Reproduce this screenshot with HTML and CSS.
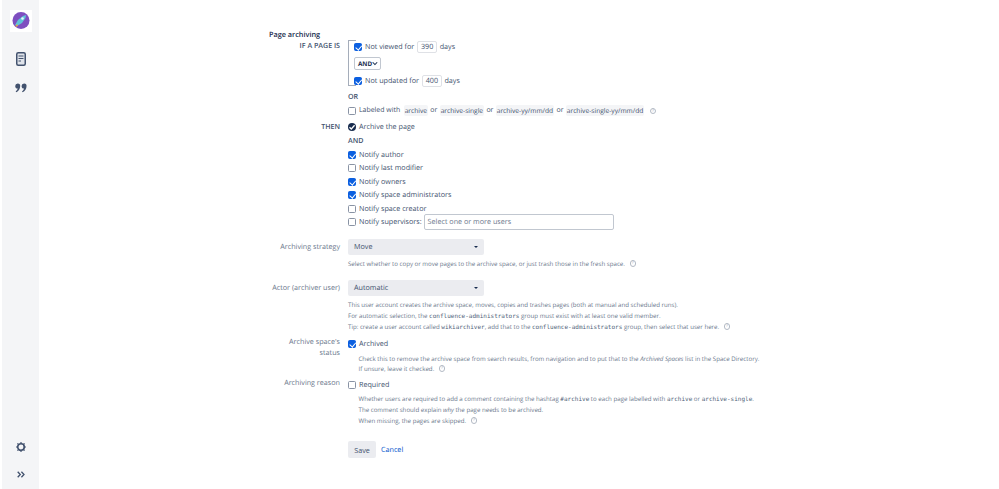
FILE: index.html
```html
<!DOCTYPE html>
<html lang="en">
<head>
<meta charset="utf-8">
<title>Page archiving</title>
<link rel="stylesheet" href="styles.css">
</head>
<body>
<div class="app">
  <nav class="sidebar">
    <div class="logo">
      <svg width="22" height="22" viewBox="0 0 22 22">
        <rect width="22" height="22" fill="#fff"/>
        <circle cx="11" cy="10.500" r="8.500" fill="#7e4fc0"/>
        <path d="M5 15 L8 10 L13 6 L16 5 L15.500 8 L12 13 L7 16 Z" fill="#5fc4d8"/>
        <circle cx="12.500" cy="8.500" r="1.300" fill="#e8f6fa"/>
        <path d="M5 17 L7 14 L8 16 Z" fill="#f0a23c"/>
      </svg>
    </div>
    <svg class="nav-icon page-icon" width="10" height="14" viewBox="0 0 10 14">
      <rect x=".75" y=".75" width="8.500" height="12.500" rx="1.500" fill="#dfe3ea" stroke="#42526e" stroke-width="1.500"/>
      <path d="M2.500 4H7.500M2.500 6.500H7.500M2.500 9H5" stroke="#42526e" stroke-width="1"/>
    </svg>
    <svg class="nav-icon quote-icon" width="12" height="10" viewBox="0 0 13 11">
      <path d="M3 0.500a2.600 2.600 0 0 1 2.600 2.800c0 3-1.700 5.700-4.300 7l-.7-1c1.200-.9 2-1.900 2.300-3.200A2.700 2.700 0 0 1 3 .5ZM10 .5a2.600 2.600 0 0 1 2.600 2.800c0 3-1.700 5.700-4.300 7l-.7-1c1.200-.9 2-1.900 2.300-3.200A2.700 2.700 0 0 1 10 .5Z" fill="#42526e"/>
    </svg>
    <div class="sidebar-spacer"></div>
    <svg class="nav-icon gear-icon" width="10" height="10" viewBox="0 0 11 11">
      <circle cx="5.500" cy="5.500" r="3.600" fill="none" stroke="#42526e" stroke-width="1.800"/>
      <path d="M5.500 0V2M5.500 9V11M0 5.500H2M9 5.500H11M1.600 1.600L3 3M8 8L9.400 9.400M1.600 9.400L3 8M8 3L9.400 1.600" stroke="#42526e" stroke-width="1.300"/>
    </svg>
    <svg class="nav-icon expand-icon" width="8" height="7" viewBox="0 0 8 7">
      <path d="M.7.700L3.300 3.500.7 6.300M4.400.7L7 3.500 4.400 6.300" fill="none" stroke="#42526e" stroke-width="1.300"/>
    </svg>
  </nav>

  <main class="main">
    <h1 class="title">Page archiving</h1>

    <div class="row r-condition">
      <div class="label strong">IF A PAGE IS</div>
      <div class="body">
        <div class="bracket">
          <div class="line"><span class="cb on"></span><span>Not viewed for</span><span class="num">390</span><span>days</span></div>
          <div class="op-select">AND<svg width="7" height="5" viewBox="0 0 7 5"><path d="M.8 1L3.500 3.700 6.200 1" fill="none" stroke="#172b4d" stroke-width="1.200"/></svg></div>
          <div class="line"><span class="cb on"></span><span>Not updated for</span><span class="num">400</span><span>days</span></div>
        </div>
        <div class="bold-line or-line">OR</div>
        <div class="line l-labeled"><span class="cb"></span><span class="lab">Labeled with</span><span class="tag">archive</span><span>or</span><span class="tag">archive-single</span><span>or</span><span class="tag">archive-yy/mm/dd</span><span>or</span><span class="tag">archive-single-yy/mm/dd</span><span class="help"></span></div>
      </div>
    </div>

    <div class="row r-then">
      <div class="label strong">THEN</div>
      <div class="body">
        <div class="line"><span class="radio"><svg width="8" height="8" viewBox="0 0 8 8"><path d="M1.500 4.200L3.300 6 6.600 2.200" fill="none" stroke="#fff" stroke-width="1.300"/></svg></span><span>Archive the page</span></div>
        <div class="bold-line and-line">AND</div>
        <div class="line tight"><span class="cb on"></span><span>Notify author</span></div>
        <div class="line tight"><span class="cb"></span><span>Notify last modifier</span></div>
        <div class="line tight"><span class="cb on"></span><span>Notify owners</span></div>
        <div class="line tight"><span class="cb on"></span><span>Notify space administrators</span></div>
        <div class="line tight"><span class="cb"></span><span>Notify space creator</span></div>
        <div class="line tight"><span class="cb"></span><span>Notify supervisors:</span><span class="user-input">Select one or more users</span></div>
      </div>
    </div>

    <div class="row r-strategy">
      <div class="label">Archiving strategy</div>
      <div class="body">
        <div class="select"><span>Move</span><i class="caret"></i></div>
        <p class="desc first">Select whether to copy or move pages to the archive space, or just trash those in the fresh space. <span class="help"></span></p>
      </div>
    </div>

    <div class="row r-actor">
      <div class="label">Actor (archiver user)</div>
      <div class="body">
        <div class="select"><span>Automatic</span><i class="caret"></i></div>
        <p class="desc first">This user account creates the archive space, moves, copies and trashes pages (both at manual and scheduled runs).</p>
        <p class="desc">For automatic selection, the <code>confluence-administrators</code> group must exist with at least one valid member.</p>
        <p class="desc">Tip: create a user account called <code>wikiarchiver</code>, add that to the <code>confluence-administrators</code> group, then select that user here. <span class="help"></span></p>
      </div>
    </div>

    <div class="row r-status">
      <div class="label">Archive space's status</div>
      <div class="body">
        <div class="line"><span class="cb on"></span><span>Archived</span></div>
        <p class="desc indent d-first">Check this to remove the archive space from search results, from navigation and to put that to the <em>Archived Spaces</em> list in the Space Directory.</p>
        <p class="desc indent">If unsure, leave it checked. <span class="help"></span></p>
      </div>
    </div>

    <div class="row r-reason">
      <div class="label">Archiving reason</div>
      <div class="body">
        <div class="line"><span class="cb"></span><span>Required</span></div>
        <p class="desc indent d-first">Whether users are required to add a comment containing the hashtag <code>#archive</code> to each page labelled with <code>archive</code> or <code>archive-single</code>.</p>
        <p class="desc indent">The comment should explain <em>why</em> the page needs to be archived.</p>
        <p class="desc indent">When missing, the pages are skipped. <span class="help"></span></p>
      </div>
    </div>

    <div class="row r-actions">
      <div class="label"></div>
      <div class="body actions"><button class="save" type="button">Save</button><a class="cancel" href="#">Cancel</a></div>
    </div>
  </main>
</div>
</body>
</html>
```
FILE: styles.css
```css
* { box-sizing: border-box; }
html, body { margin: 0; height: 489px; overflow: hidden; background: #fff; }
body { font-family: "Open Sans", "Noto Sans", sans-serif; font-size: 7.200px; color: #42526e; text-rendering: geometricPrecision; }
.app { display: flex; height: 489px; }
.sidebar { width: 37px; margin-left: 2px; background: #f4f5f7; display: flex; flex-direction: column; align-items: center; flex: none; }
.logo { margin-top: 10px; height: 22px; }
.logo svg { display: block; }
.nav-icon { display: block; flex: none; }
.page-icon { margin-top: 20px; }
.quote-icon { margin-top: 17px; }
.sidebar-spacer { flex: 1; }
.expand-icon { margin-top: 19px; margin-bottom: 11px; }

.main { margin-left: 230px; width: 520px; padding-top: 29px; }
.title { margin: 0; font-size: 7.300px; line-height: 12px; font-weight: 600; color: #172b4d; }
.row { display: flex; }
.label { width: 71px; flex: none; text-align: right; line-height: 11px; color: #6b778c; }
.r-actor .label { white-space: nowrap; }
.label.strong { font-weight: 600; color: #42526e; font-size: 7.100px; }
.body { margin-left: 8px; flex: 1; min-width: 0; }
.line { display: flex; align-items: center; height: 13.500px; white-space: nowrap; gap: 3px; }
.bracket { border: 1px solid #a5adba; border-right: 0; width: 8px; height: 46px; margin-top: -1px; padding: 0 0 0 5px; }
.bracket .line { height: 12px; width: 120px; }
.num { display: inline-block; width: 20px; height: 12px; line-height: 10px; border: 1px solid #dfe1e6; border-radius: 2px; text-align: center; color: #42526e; background: #fff; margin-right: -.5px; }
.op-select { display: flex; align-items: center; justify-content: space-between; width: 27px; height: 13px; margin: 4px 0 5px; padding: 0 2px 0 3px; border: 1px solid #c1c7d0; border-radius: 2px; font-weight: 700; font-size: 6.300px; color: #172b4d; background: #fff; }
.cb { width: 8px; height: 8px; flex: none; border: 1px solid #8993a4; border-radius: 1.500px; background: #fff; position: relative; }
.cb.on { border-color: #0b5fe0; background: #0b5fe0; }
.cb.on::after { content: ""; position: absolute; left: 1.500px; top: 0; width: 2.500px; height: 4.500px; border: solid #fff; border-width: 0 1.200px 1.200px 0; transform: rotate(40deg); }
.bold-line { font-weight: 600; line-height: 12px; font-size: 7.100px; color: #42526e; }
.or-line { margin-top: 5px; }
.l-labeled { margin-top: 1px; gap: 2.300px; font-size: 6.950px; }
.lab { margin: 0 1.200px 0 .700px; }
.tag { background: #f4f5f7; border-radius: 2px; padding: 0 1px; line-height: 11px; font-size: 6.650px; }
.help { display: inline-block; width: 6.500px; height: 6.500px; border: 1px solid #b3bac5; border-radius: 50%; margin-left: 3px; vertical-align: -.5px; flex: none; position: relative; }
.help::after { content: "?"; position: absolute; inset: 0; font-size: 4.500px; line-height: 4.500px; text-align: center; color: #a5adba; }
.radio { width: 8px; height: 8px; border-radius: 50%; background: #172b4d; flex: none; display: flex; align-items: center; justify-content: center; }
.radio svg { display: block; }
.r-then { margin-top: 3px; }
.r-then .label { line-height: 13px; }
.and-line { margin-top: 1px; margin-bottom: 1px; }
.tight { height: 13.500px; }
.user-input { display: block; width: 190px; height: 16px; line-height: 14px; border: 1px solid #c1c7d0; border-radius: 2px; padding-left: 3px; margin-left: -1px; color: #6b778c; }
.r-strategy { margin-top: 10px; }
.r-strategy .label, .r-actor .label { line-height: 16px; }
.select { width: 136px; height: 16px; background: #ebecf0; border-radius: 2px; display: flex; align-items: center; justify-content: space-between; padding: 0 6px; color: #42526e; }
.caret { width: 0; height: 0; border: 2.500px solid transparent; border-top-color: #172b4d; border-bottom-width: 0; }
.desc { margin: 0; height: 11px; font-size: 6.150px; line-height: 11px; color: #6b778c; white-space: nowrap; }
.desc.first { margin-top: 3px; }
.desc code { font-family: "DejaVu Sans Mono", monospace; font-size: 6px; line-height: 1; color: #505f79; }
.desc em { font-style: italic; }
.indent { padding-left: 10.500px; }
.r-actor { margin-top: 11px; }
.r-status { margin-top: 5.250px; }
.r-status .d-first { margin-top: 1.750px; }
.r-status .desc:last-child { margin-top: -.5px; }
.r-reason { margin-top: 4.250px; }
.r-reason .d-first { margin-top: 1.250px; }
.r-actions { margin-top: 15px; }
.actions { display: flex; align-items: center; gap: 5px; }
.save { width: 28px; height: 17px; padding: 0; border: 0; border-radius: 2px; background: #ebecf0; font: inherit; color: #42526e; }
.cancel { color: #0052cc; text-decoration: none; }
```
